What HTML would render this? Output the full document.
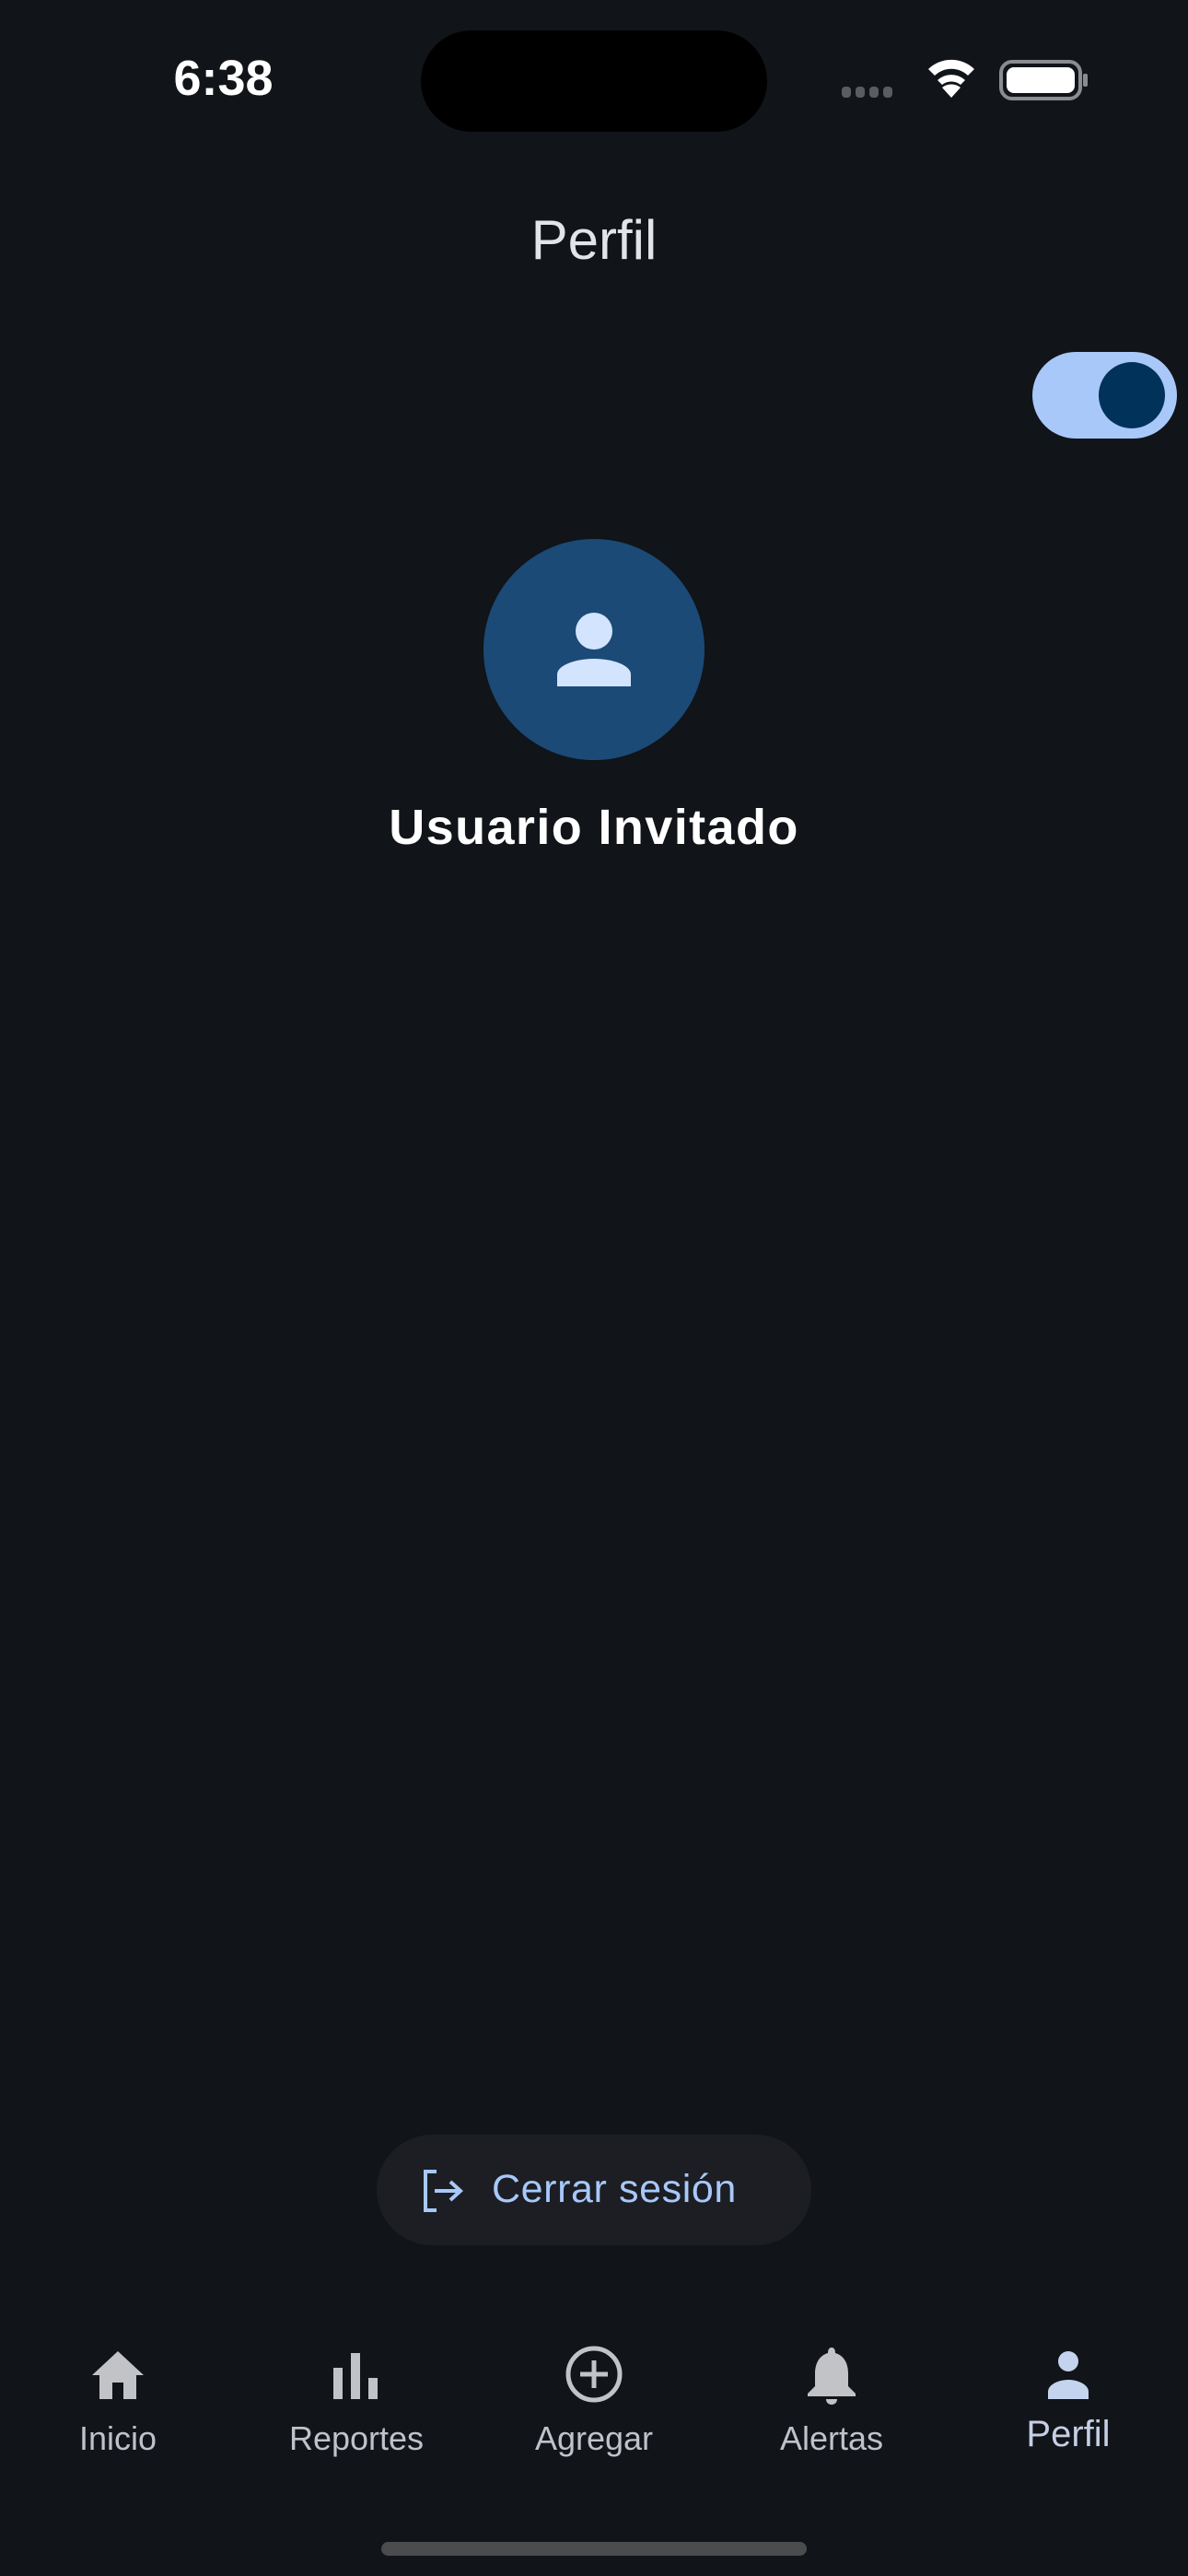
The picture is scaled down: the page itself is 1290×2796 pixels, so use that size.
<!DOCTYPE html>
<html><head><meta charset="utf-8"><style>
html,body{margin:0;padding:0;}
body{width:1290px;height:2796px;background:#111418;position:relative;overflow:hidden;font-family:"Liberation Sans",sans-serif;}
.abs{position:absolute;}
.lbl{position:absolute;width:260px;text-align:center;color:#bfc2c8;font-size:36px;}
</style></head><body>
<div class="abs" style="left:150px;top:55px;width:185px;text-align:center;color:#fff;font-size:54px;font-weight:bold;line-height:60px;">6:38</div>
<div class="abs" style="left:457px;top:33px;width:376px;height:110px;border-radius:55px;background:#000;"></div>
<svg class="abs" style="left:910px;top:60px" width="280" height="56" viewBox="0 0 280 56">
 <g fill="#5a5c60"><rect x="4" y="34" width="10" height="12" rx="4"/><rect x="19" y="34" width="10" height="12" rx="4"/><rect x="34" y="34" width="10" height="12" rx="4"/><rect x="49" y="34" width="10" height="12" rx="4"/></g>
 <g fill="#fff"><path d="M123 46 L113 35 A16 16 0 0 1 133 35 Z"/><path d="M108 30 A22 22 0 0 1 138 30 L133 35 A16 16 0 0 0 113 35 Z" transform="translate(0,-3)"/><path d="M98 19 A36 36 0 0 1 148 19 L141 26 A26 26 0 0 0 105 26 Z" transform="translate(0,-4)"/></g>
 <rect x="177" y="7" width="86" height="40" rx="12" fill="none" stroke="#8a8c90" stroke-width="4"/>
 <rect x="183" y="13" width="74" height="28" rx="8" fill="#fff"/>
 <rect x="266" y="20" width="5" height="14" rx="2" fill="#8a8c90"/>
</svg>
<div class="abs" style="left:0;top:226px;width:1290px;text-align:center;color:#e2e4e8;font-size:60px;line-height:70px;">Perfil</div>
<div class="abs" style="left:1121px;top:382px;width:157px;height:94px;border-radius:47px;background:#a8c8fa;"></div>
<div class="abs" style="left:1193px;top:393px;width:72px;height:72px;border-radius:50%;background:#00325a;"></div>
<div class="abs" style="left:525px;top:585px;width:240px;height:240px;border-radius:50%;background:#1b4a77;"></div>
<svg class="abs" style="left:600px;top:660px" width="90" height="90" viewBox="0 0 90 90">
 <circle cx="45" cy="25" r="20" fill="#d3e4ff"/>
 <path d="M5 85 L5 72 C5 62 25 55 45 55 C65 55 85 62 85 72 L85 85 Z" fill="#d3e4ff"/>
</svg>
<div class="abs" style="left:0;top:866px;width:1290px;text-align:center;color:#fff;font-size:54px;font-weight:bold;letter-spacing:1.4px;line-height:64px;">Usuario Invitado</div>
<div class="abs" style="left:409px;top:2317px;width:472px;height:120px;border-radius:60px;background:#1c1e23;"></div>
<svg class="abs" style="left:458px;top:2353px" width="50" height="50" viewBox="0 0 50 50">
 <path d="M16 4 H4 V46 H16" fill="none" stroke="#a8c8fa" stroke-width="4"/>
 <path d="M14 25 H40 M31 15 L42 25 L31 35" fill="none" stroke="#a8c8fa" stroke-width="4"/>
</svg>
<div class="abs" style="left:534px;top:2351px;color:#a8c8fa;font-size:43px;letter-spacing:0.6px;line-height:50px;">Cerrar sesión</div>
<!-- nav -->
<svg class="abs" style="left:98px;top:2548px" width="60" height="60" viewBox="0 0 60 60"><path d="M30 4 L2 30 L10 30 L10 56 L24 56 L24 38 L36 38 L36 56 L50 56 L50 30 L58 30 Z" fill="#c1c3c6"/></svg>
<svg class="abs" style="left:357px;top:2548px" width="60" height="60" viewBox="0 0 60 60"><g fill="#c1c3c6"><rect x="5" y="22" width="10" height="34"/><rect x="24" y="6" width="10" height="50"/><rect x="43" y="33" width="10" height="23"/></g></svg>
<svg class="abs" style="left:612px;top:2544px" width="66" height="66" viewBox="0 0 66 66"><circle cx="33" cy="33" r="28" fill="none" stroke="#c1c3c6" stroke-width="5"/><path d="M33 18 V48 M18 33 H48" stroke="#c1c3c6" stroke-width="5"/></svg>
<svg class="abs" style="left:873px;top:2546px" width="60" height="66" viewBox="0 0 60 66"><path d="M30 2 C27 2 26 5 26 8 C16 11 12 20 12 30 L12 44 L4 52 L4 55 L56 55 L56 52 L48 44 L48 30 C48 20 44 11 34 8 C34 5 33 2 30 2 Z M24 58 H36 C36 62 33 64 30 64 C27 64 24 62 24 58 Z" fill="#c1c3c6"/></svg>
<svg class="abs" style="left:1130px;top:2548px" width="60" height="60" viewBox="0 0 60 60"><circle cx="30" cy="15" r="11" fill="#c4d3ee"/><path d="M8 56 L8 48 C8 40 20 35 30 35 C40 35 52 40 52 48 L52 56 Z" fill="#c4d3ee"/></svg>
<div class="lbl" style="left:-2px;top:2626px;">Inicio</div>
<div class="lbl" style="left:257px;top:2626px;">Reportes</div>
<div class="lbl" style="left:515px;top:2626px;">Agregar</div>
<div class="lbl" style="left:773px;top:2626px;">Alertas</div>
<div class="lbl" style="left:1030px;top:2620px;color:#c4cfe4;font-size:40px;">Perfil</div>
<div class="abs" style="left:414px;top:2759px;width:462px;height:15px;border-radius:8px;background:#4b4c4e;"></div>
</body></html>
